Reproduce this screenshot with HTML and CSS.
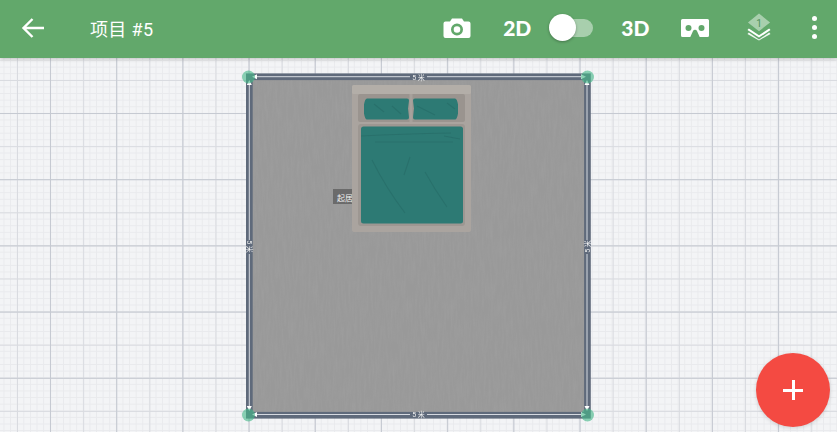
FILE: index.html
```html
<!DOCTYPE html>
<html lang="zh">
<head>
<meta charset="utf-8">
<title>项目 #5</title>
<link rel="stylesheet" href="styles.css">
</head>
<body>
<div class="app">
  <header class="topbar">
    <div class="left">
      <svg class="back" width="24" height="22" viewBox="0 0 24 22"><path d="M23 11H3M11.500 2 2.500 11l9 9" fill="none" stroke="#fff" stroke-width="2.400"/></svg>
      <span class="title">项目 #5</span>
    </div>
    <div class="tools">
      <svg class="cam" width="28" height="22" viewBox="0 0 28 22"><path fill-rule="evenodd" fill="#fff" d="M9 1.500h10l2 3h4.500a2 2 0 0 1 2 2V19a2 2 0 0 1-2 2h-23a2 2 0 0 1-2-2V6.500a2 2 0 0 1 2-2H7zM14 6.500a6 6 0 1 0 0 12 6 6 0 0 0 0-12zm0 2.700a3.300 3.300 0 1 1 0 6.600 3.300 3.300 0 0 1 0-6.600z"/></svg>
      <span class="mode mode2d">2D</span>
      <div class="switch"><div class="track"></div><div class="thumb"></div></div>
      <span class="mode mode3d">3D</span>
      <svg class="vr" width="28" height="18" viewBox="0 0 28 18"><path fill-rule="evenodd" fill="#fff" d="M1.500 0h25A1.500 1.500 0 0 1 28 1.500v15a1.500 1.500 0 0 1-1.500 1.500h-7.800l-2.700-6a2.200 2.200 0 0 0-4 0l-2.700 6H1.500A1.500 1.500 0 0 1 0 16.500v-15A1.500 1.500 0 0 1 1.500 0zM7.500 6a3 3 0 1 0 0 6 3 3 0 0 0 0-6zm13 0a3 3 0 1 0 0 6 3 3 0 0 0 0-6z"/></svg>
      <svg class="layers" width="24" height="28" viewBox="0 0 26 29">
        <path fill="#fff" d="M2 16l11 7.500L24 16l1.500 1.800L13 26 .5 17.800z"/>
        <path fill="#fff" d="M2 20.500 13 28l11-7.500 1.500 1.500L13 29 .5 22z" opacity=".9"/>
        <path fill="#fff" opacity=".45" d="M13 0l12 9.500L13 19 1 9.500z"/>
        <text x="13" y="14" class="layer-num">1</text>
      </svg>
      <div class="more"><i></i><i></i><i></i></div>
    </div>
  </header>
  <main class="canvas">
    <svg class="plan" width="360" height="360" viewBox="240 68 360 360">
      <defs>
        <filter id="wood" x="0" y="0" width="100%" height="100%">
          <feTurbulence type="fractalNoise" baseFrequency="0.45 0.05" numOctaves="3" seed="7"/>
          <feColorMatrix type="matrix" values="0 0 0 0 0.36  0 0 0 0 0.36  0 0 0 0 0.36  1.3 0 0 0 -0.42"/>
        </filter>
        <filter id="soft" x="-5%" y="-5%" width="110%" height="110%"><feGaussianBlur stdDeviation="0.7"/></filter>
      </defs>
      <rect x="250" y="78" width="336" height="336" fill="#999999"/>
      <rect x="250" y="78" width="336" height="336" filter="url(#wood)" opacity=".65"/>

      <rect x="249.350" y="76.750" width="338.100" height="338.500" fill="none" stroke="#5f6a7b" stroke-width="6.700"/>
      <g stroke="#d6dae1" stroke-width="1" fill="none">
        <path d="M255 76.700h155M427 76.700h155M255 414.500h155M427 414.500h155M249.300 83v157M249.300 254v156M587 83v157M587 254v156"/>
      </g>
      <g fill="#fff">
        <path d="M252 76.700l5-2.500v5zM586 76.700l-5-2.500v5zM252 414.500l5-2.500v5zM586 414.500l-5-2.500v5zM249.300 80l2.500 5h-5zM587 80l2.500 5h-5zM249.300 411l2.500-5h-5zM587 411l2.500-5h-5z"/>
      </g>
      <g class="dim">
        <text x="418.500" y="79.500">5 米</text>
        <text x="418.500" y="417">5 米</text>
        <text transform="translate(247 246.500) rotate(90)">5 米</text>
        <text transform="translate(589.500 246.500) rotate(-90)">5 米</text>
      </g>
      <g fill="#46b98a" opacity=".62">
        <circle cx="248.500" cy="77" r="6.500"/><circle cx="587.500" cy="77" r="6.500"/>
        <circle cx="248.500" cy="415" r="6.500"/><circle cx="587.500" cy="415" r="6.500"/>
      </g>

      <rect x="333" y="189" width="20" height="15" fill="#6b6b6b"/>
      <text x="345" y="201" class="room-label">起居</text>

      <rect x="352" y="85" width="119" height="147" rx="2" fill="#aaa49f"/>
      <rect x="352" y="85" width="119" height="9" rx="1.500" fill="#b3aea8"/>
      <rect x="358" y="94" width="107" height="28" rx="2" fill="#9a948f" filter="url(#soft)"/>
      <rect x="358" y="124" width="107" height="102" rx="3" fill="#9d9792" filter="url(#soft)"/>
      <rect x="409.500" y="94" width="3" height="28" fill="#a7a19c" filter="url(#soft)"/>
      <path d="M367 98.500h40q2 0 2 2l-1 8 1 9q0 2-2 2h-40q-2 0-3-6v-9q1-6 3-6z" fill="#2d7a74"/>
      <path d="M415 98.500h40q2 0 3 6v9q-1 6-3 6h-40q-2 0-2-2l1-9-1-8q0-2 2-2z" fill="#2d7a74"/>
      <rect x="361" y="126.500" width="102" height="97" rx="2.500" fill="#2d7a74"/>
      <g fill="none" stroke="#215f5c" stroke-width="1.100" opacity=".35" filter="url(#soft)">
        <path d="M374 104l10 8M392 106l9 8M417 106l18 9M447 103l8 6"/>
        <path d="M361 136q40-2 90-3M375 142h78M410 157l-6 18M372 160q14 28 33 53M425 172q10 18 22 35M444 136l16 3"/>
      </g>
    </svg>
    <button class="fab" type="button"><span class="plus-h"></span><span class="plus-v"></span></button>
  </main>
</div>
</body>
</html>
```
FILE: styles.css
```css
* { box-sizing: border-box; }
html, body { margin: 0; height: 100%; overflow: hidden; }
body { font-family: Roboto, "Noto Sans CJK SC", sans-serif; }
.app { width: 837px; height: 432px; display: flex; flex-direction: column; }
.topbar {
  flex: 0 0 58px; background: #62a86b; color: #fff; padding-bottom: 3px;
  display: flex; align-items: center; justify-content: space-between;
  position: relative; z-index: 2;
  box-shadow: 0 1px 4px rgba(0,0,0,.22);
}
.left { display: flex; align-items: center; padding-left: 21px; }
.back { display: block; }
.title { margin-left: 45px; font-size: 18px; letter-spacing: .35px; }
.tools { display: flex; align-items: center; padding-right: 20px; }
.mode { font-family: Lato, sans-serif; font-weight: 900; font-size: 21px; line-height: 1; }
.mode2d { margin-left: 32px; }
.mode3d { margin-left: 28px; }
.switch { position: relative; width: 44px; height: 28px; margin-left: 18px; }
.track { position: absolute; left: 8px; right: 0; top: 5px; height: 18px; border-radius: 9px; background: rgba(255,255,255,.45); }
.thumb { position: absolute; left: 0; top: 0; width: 27px; height: 27px; border-radius: 50%; background: #fff; box-shadow: 0 1px 3px rgba(0,0,0,.3); }
.vr { margin-left: 31px; }
.layers { margin-left: 38px; margin-top: -2px; }
.layer-num { font: 11px Roboto, sans-serif; fill: #4f8f59; text-anchor: middle; }
.more { margin-left: 41px; display: flex; flex-direction: column; gap: 3.500px; }
.more i { display: block; width: 5.500px; height: 5.500px; border-radius: 50%; background: #fff; }
.canvas {
  flex: 1; position: relative; overflow: hidden;
  background-color: #f3f4f6;
  background-image:
    linear-gradient(90deg, #c6cad2 1px, transparent 1px),
    linear-gradient(#c6cad2 1px, transparent 1px),
    linear-gradient(90deg, #d9dbe0 1px, transparent 1px),
    linear-gradient(#d9dbe0 1px, transparent 1px),
    linear-gradient(90deg, #e9eaed 1px, transparent 1px),
    linear-gradient(#e9eaed 1px, transparent 1px);
  background-size: 66.200px 66.200px, 66.200px 66.200px, 33.100px 33.100px, 33.100px 33.100px, 6.620px 6.620px, 6.620px 6.620px;
  background-position: 50px 55px, 50px 55px, 17px 22px, 17px 22px, 3.500px 2px, 3.500px 2px;
}
.plan { position: absolute; left: 240px; top: 10px; display: block; filter: blur(.35px); }
.dim text { font: 7px Roboto, "Noto Sans CJK SC", sans-serif; fill: #f2f2f2; text-anchor: middle; }
.room-label { font: 8px "Noto Sans CJK SC", sans-serif; fill: #f0f0f0; text-anchor: middle; }
.fab {
  position: absolute; left: 756px; top: 295px; width: 74px; height: 74px;
  border: 0; padding: 0; border-radius: 50%; background: #f44a42;
  box-shadow: 0 1px 4px rgba(0,0,0,.15);
}
.plus-h { position: absolute; left: 27px; top: 35.500px; width: 20px; height: 3px; background: #fff; }
.plus-v { position: absolute; left: 35.500px; top: 27px; width: 3px; height: 20px; background: #fff; }
```
